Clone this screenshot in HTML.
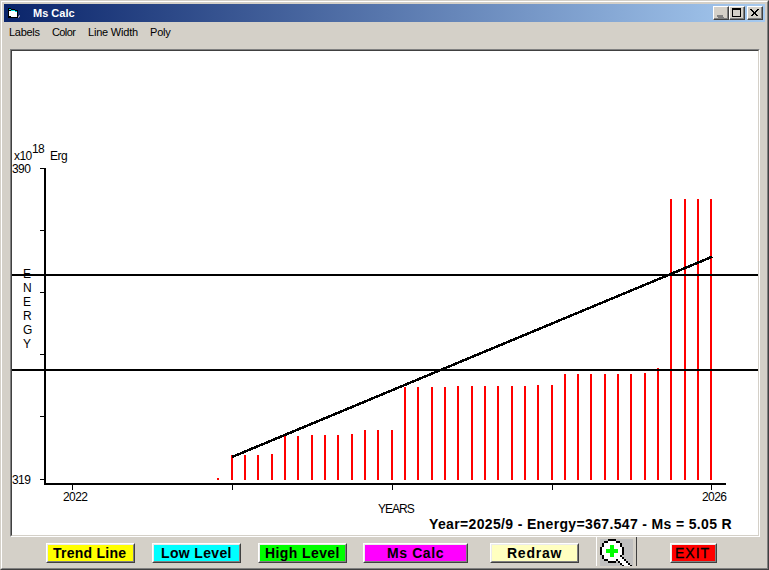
<!DOCTYPE html>
<html><head><meta charset="utf-8">
<style>
*{margin:0;padding:0;box-sizing:border-box}
html,body{width:769px;height:570px;overflow:hidden;background:#D4D0C8;font-family:"Liberation Sans",sans-serif;}
.a{position:absolute}
.t{position:absolute;white-space:nowrap;line-height:1}
.btn{position:absolute;height:20px;border-top:1px solid #fff;border-left:1px solid #fff;border-right:1px solid #404040;border-bottom:1px solid #404040;}
.btn>div{position:absolute;left:0;top:0;right:0;bottom:0;border-top:1px solid #ECECEC;border-left:1px solid #ECECEC;border-right:1px solid #808080;border-bottom:1px solid #808080;}
.bt{position:absolute;white-space:nowrap;line-height:1;font-weight:bold;font-size:14px;color:#000}
.cb{position:absolute;top:6px;width:16px;height:14px;background:#D4D0C8;border-top:1px solid #fff;border-left:1px solid #fff;border-right:1px solid #404040;border-bottom:1px solid #404040;}
.cb>div{position:absolute;left:0;top:0;right:0;bottom:0;border-right:1px solid #808080;border-bottom:1px solid #808080;}
</style></head><body>
<!-- window frame -->
<div class="a" style="left:0;top:0;width:769px;height:570px;border-top:1px solid #D4D0C8;border-left:1px solid #D4D0C8;border-right:1px solid #404040;border-bottom:1px solid #404040;"></div>
<div class="a" style="left:1px;top:1px;width:767px;height:568px;border-top:1px solid #fff;border-left:1px solid #fff;border-right:1px solid #808080;border-bottom:1px solid #808080;"></div>
<!-- title bar -->
<div class="a" style="left:4px;top:4px;width:761px;height:18px;background:linear-gradient(to right,#0A246A,#A6CAF0);"></div>
<!-- title icon -->
<svg class="a" style="left:0;top:0" width="24" height="24" shape-rendering="crispEdges">
<rect x="8" y="8" width="3" height="1" fill="#000"/>
<rect x="8" y="9" width="7" height="1" fill="#000"/>
<rect x="8" y="10" width="10" height="8" fill="#000"/>

<rect x="9" y="9" width="2" height="1" fill="#00E0E0"/>
<rect x="11" y="10" width="4" height="1" fill="#00E0E0"/>
<rect x="15" y="11" width="2" height="1" fill="#00E0E0"/>
<rect x="9" y="12" width="8" height="4" fill="#fff"/>
<rect x="9" y="11" width="6" height="1" fill="#fff"/>
<rect x="11" y="16" width="6" height="1" fill="#fff"/>
<rect x="19" y="15" width="1" height="1" fill="#9090B0"/>
<rect x="18" y="16" width="2" height="1" fill="#9090B0"/>
<rect x="18" y="17" width="1" height="1" fill="#9090B0"/>
</svg>
<div class="t" style="left:33px;top:8px;font-size:11px;font-weight:bold;color:#fff;">Ms Calc</div>
<!-- caption buttons -->
<div class="cb" style="left:713px;"><div></div>
  <div class="a" style="left:4px;top:10px;width:6px;height:1px;background:#fff;"></div>
  <div class="a" style="left:3px;top:8px;width:6px;height:2px;background:#808080;"></div>
</div>
<div class="cb" style="left:729px;"><div></div>
  <div class="a" style="left:2px;top:1px;width:9px;height:9px;border:1px solid #000;border-top-width:2px;"></div>
</div>
<div class="cb" style="left:747px;"><div></div>
  <svg class="a" style="left:-1px;top:0" width="14" height="12" shape-rendering="crispEdges">
    <path d="M3.5 2.5 L10.5 9.5 M4.5 2.5 L11.5 9.5 M10.5 2.5 L3.5 9.5 M11.5 2.5 L4.5 9.5" stroke="#000" stroke-width="1"/>
  </svg>
</div>
<!-- menu -->
<div class="t" style="left:9px;top:27px;font-size:11px;letter-spacing:-0.3px;color:#000;">Labels</div>
<div class="t" style="left:52px;top:27px;font-size:11px;letter-spacing:-0.6px;color:#000;">Color</div>
<div class="t" style="left:88px;top:27px;font-size:11px;letter-spacing:-0.2px;color:#000;">Line Width</div>
<div class="t" style="left:150px;top:27px;font-size:11px;letter-spacing:-0.2px;color:#000;">Poly</div>
<!-- panel -->
<div class="a" style="left:10px;top:49px;width:750px;height:488px;border-top:1px solid #808080;border-left:1px solid #808080;border-right:1px solid #fff;border-bottom:1px solid #fff;"></div>
<div class="a" style="left:11px;top:50px;width:748px;height:486px;background:#fff;border-top:1px solid #404040;border-left:1px solid #404040;border-right:1px solid #D4D0C8;border-bottom:1px solid #D4D0C8;"></div>
<!-- chart -->
<svg class="a" style="left:0;top:0" width="769" height="570" shape-rendering="crispEdges">
<rect x="217" y="478" width="2" height="2" fill="#f00"/>
<rect x="231" y="455" width="2" height="25" fill="#f00"/>
<rect x="244" y="455" width="2" height="25" fill="#f00"/>
<rect x="257" y="455" width="2" height="25" fill="#f00"/>
<rect x="271" y="454" width="2" height="26" fill="#f00"/>
<rect x="284" y="436" width="2" height="44" fill="#f00"/>
<rect x="297" y="436" width="2" height="44" fill="#f00"/>
<rect x="311" y="435" width="2" height="45" fill="#f00"/>
<rect x="324" y="435" width="2" height="45" fill="#f00"/>
<rect x="337" y="435" width="2" height="45" fill="#f00"/>
<rect x="351" y="434" width="2" height="46" fill="#f00"/>
<rect x="364" y="430" width="2" height="50" fill="#f00"/>
<rect x="377" y="430" width="2" height="50" fill="#f00"/>
<rect x="391" y="430" width="2" height="50" fill="#f00"/>
<rect x="404" y="387" width="2" height="93" fill="#f00"/>
<rect x="417" y="387" width="2" height="93" fill="#f00"/>
<rect x="431" y="387" width="2" height="93" fill="#f00"/>
<rect x="444" y="387" width="2" height="93" fill="#f00"/>
<rect x="457" y="386" width="2" height="94" fill="#f00"/>
<rect x="471" y="386" width="2" height="94" fill="#f00"/>
<rect x="484" y="386" width="2" height="94" fill="#f00"/>
<rect x="497" y="386" width="2" height="94" fill="#f00"/>
<rect x="511" y="386" width="2" height="94" fill="#f00"/>
<rect x="524" y="386" width="2" height="94" fill="#f00"/>
<rect x="537" y="385" width="2" height="95" fill="#f00"/>
<rect x="551" y="385" width="2" height="95" fill="#f00"/>
<rect x="564" y="374" width="2" height="106" fill="#f00"/>
<rect x="577" y="374" width="2" height="106" fill="#f00"/>
<rect x="590" y="374" width="2" height="106" fill="#f00"/>
<rect x="604" y="374" width="2" height="106" fill="#f00"/>
<rect x="617" y="374" width="2" height="106" fill="#f00"/>
<rect x="630" y="374" width="2" height="106" fill="#f00"/>
<rect x="644" y="373" width="2" height="107" fill="#f00"/>
<rect x="657" y="368" width="2" height="112" fill="#f00"/>
<rect x="670" y="199" width="2" height="281" fill="#f00"/>
<rect x="684" y="199" width="2" height="281" fill="#f00"/>
<rect x="697" y="199" width="2" height="281" fill="#f00"/>
<rect x="710" y="199" width="2" height="281" fill="#f00"/>
<g fill="#000">
<rect x="44" y="168" width="2" height="317"/>
<rect x="44" y="483" width="682" height="2"/>
<rect x="40" y="168" width="4" height="1"/><rect x="40" y="230" width="4" height="1"/><rect x="40" y="292" width="4" height="1"/><rect x="40" y="354" width="4" height="1"/><rect x="40" y="416" width="4" height="1"/><rect x="40" y="479" width="4" height="1"/>
<rect x="72" y="485" width="1" height="5"/><rect x="232" y="485" width="1" height="5"/><rect x="392" y="485" width="1" height="5"/><rect x="552" y="485" width="1" height="5"/><rect x="711" y="485" width="1" height="5"/>
<rect x="12" y="274" width="746" height="2"/>
<rect x="12" y="369" width="746" height="2"/>
</g>
<line x1="232" y1="457" x2="712.5" y2="256.6" stroke="#000" stroke-width="2.5"/>
</svg>
<!-- chart text -->
<div class="t" style="left:14px;top:150px;font-size:12px;letter-spacing:-0.55px;color:#000;">x10</div>
<div class="t" style="left:32px;top:143px;font-size:12px;letter-spacing:-0.55px;color:#000;">18</div>
<div class="t" style="left:50px;top:150px;font-size:12px;letter-spacing:-0.55px;color:#000;">Erg</div>
<div class="t" style="left:12px;top:163px;font-size:12px;letter-spacing:-0.55px;color:#000;">390</div>
<div class="t" style="left:12px;top:474px;font-size:12px;letter-spacing:-0.55px;color:#000;">319</div>
<div class="t" style="left:63px;top:491px;font-size:12px;letter-spacing:-0.55px;color:#000;">2022</div>
<div class="t" style="left:702px;top:491px;font-size:12px;letter-spacing:-0.55px;color:#000;">2026</div>
<div class="t" style="left:378px;top:503px;font-size:12px;letter-spacing:-1px;color:#000;">YEARS</div>
<div class="t" style="left:23px;top:268px;font-size:12px;color:#000;">E</div>
<div class="t" style="left:23px;top:282px;font-size:12px;color:#000;">N</div>
<div class="t" style="left:23px;top:296px;font-size:12px;color:#000;">E</div>
<div class="t" style="left:23px;top:310px;font-size:12px;color:#000;">R</div>
<div class="t" style="left:23px;top:324px;font-size:12px;color:#000;">G</div>
<div class="t" style="left:23px;top:338px;font-size:12px;color:#000;">Y</div>
<div class="t" style="left:429px;top:517px;font-size:14px;font-weight:bold;letter-spacing:0.35px;color:#000;">Year=2025/9 - Energy=367.547 - Ms = 5.05 R</div>
<!-- buttons -->
<div class="btn" style="left:46px;top:543px;width:89px;background:#FFFF00;"><div></div><span class="bt" style="left:6px;top:2px;letter-spacing:0.25px">Trend Line</span></div>
<div class="btn" style="left:152px;top:543px;width:89px;background:#00FFFF;"><div></div><span class="bt" style="left:8px;top:2px;letter-spacing:0.35px">Low Level</span></div>
<div class="btn" style="left:258px;top:543px;width:89px;background:#00FF00;"><div></div><span class="bt" style="left:6px;top:2px;letter-spacing:0.4px">High Level</span></div>
<div class="btn" style="left:363px;top:543px;width:105px;background:#FF00FF;"><div></div><span class="bt" style="left:23px;top:2px;letter-spacing:0.6px">Ms Calc</span></div>
<div class="btn" style="left:490px;top:543px;width:89px;background:#FFFFC0;"><div></div><span class="bt" style="left:16px;top:2px;letter-spacing:0.75px">Redraw</span></div>
<div class="btn" style="left:670px;top:543px;width:47px;background:#FF0000;"><div></div><span class="bt" style="left:4px;top:2px;font-weight:normal;letter-spacing:1px;-webkit-text-stroke:0.3px #000">EXIT</span></div>
<!-- magnifier -->
<div class="a" style="left:596px;top:537px;width:1px;height:29px;background:#fff;"></div>
<div class="a" style="left:636px;top:537px;width:1px;height:29px;background:#404040;"></div>
<div class="a" style="left:600px;top:539px;width:33px;height:27px;background:#C0C0C0;"></div>
<svg class="a" style="left:0;top:0" width="769" height="570" shape-rendering="crispEdges"><rect x="608" y="541" width="8" height="2" fill="#fff"/><rect x="604" y="543" width="16" height="4" fill="#fff"/><rect x="602" y="547" width="20" height="8" fill="#fff"/><rect x="604" y="555" width="16" height="4" fill="#fff"/><rect x="620" y="557" width="2" height="2" fill="#fff"/><rect x="608" y="559" width="8" height="2" fill="#fff"/><rect x="618" y="559" width="6" height="2" fill="#fff"/><rect x="620" y="561" width="6" height="2" fill="#fff"/><rect x="622" y="563" width="6" height="2" fill="#fff"/><rect x="624" y="565" width="6" height="1" fill="#fff"/><rect x="608" y="539" width="8" height="2" fill="#000"/><rect x="604" y="541" width="4" height="2" fill="#000"/><rect x="616" y="541" width="4" height="2" fill="#000"/><rect x="602" y="543" width="2" height="4" fill="#000"/><rect x="620" y="543" width="2" height="4" fill="#000"/><rect x="600" y="547" width="2" height="8" fill="#000"/><rect x="622" y="547" width="2" height="8" fill="#000"/><rect x="602" y="555" width="2" height="4" fill="#000"/><rect x="620" y="555" width="2" height="2" fill="#000"/><rect x="604" y="559" width="4" height="2" fill="#000"/><rect x="616" y="559" width="2" height="2" fill="#000"/><rect x="608" y="561" width="8" height="2" fill="#000"/><rect x="622" y="557" width="2" height="2" fill="#000"/><rect x="624" y="559" width="2" height="2" fill="#000"/><rect x="626" y="561" width="2" height="2" fill="#000"/><rect x="628" y="563" width="2" height="2" fill="#000"/><rect x="630" y="565" width="2" height="1" fill="#000"/><rect x="618" y="561" width="2" height="2" fill="#000"/><rect x="620" y="563" width="2" height="2" fill="#000"/><rect x="622" y="565" width="2" height="1" fill="#000"/><rect x="610" y="545" width="4" height="12" fill="#00FF00"/><rect x="606" y="549" width="12" height="4" fill="#00FF00"/></svg>
</body></html>
